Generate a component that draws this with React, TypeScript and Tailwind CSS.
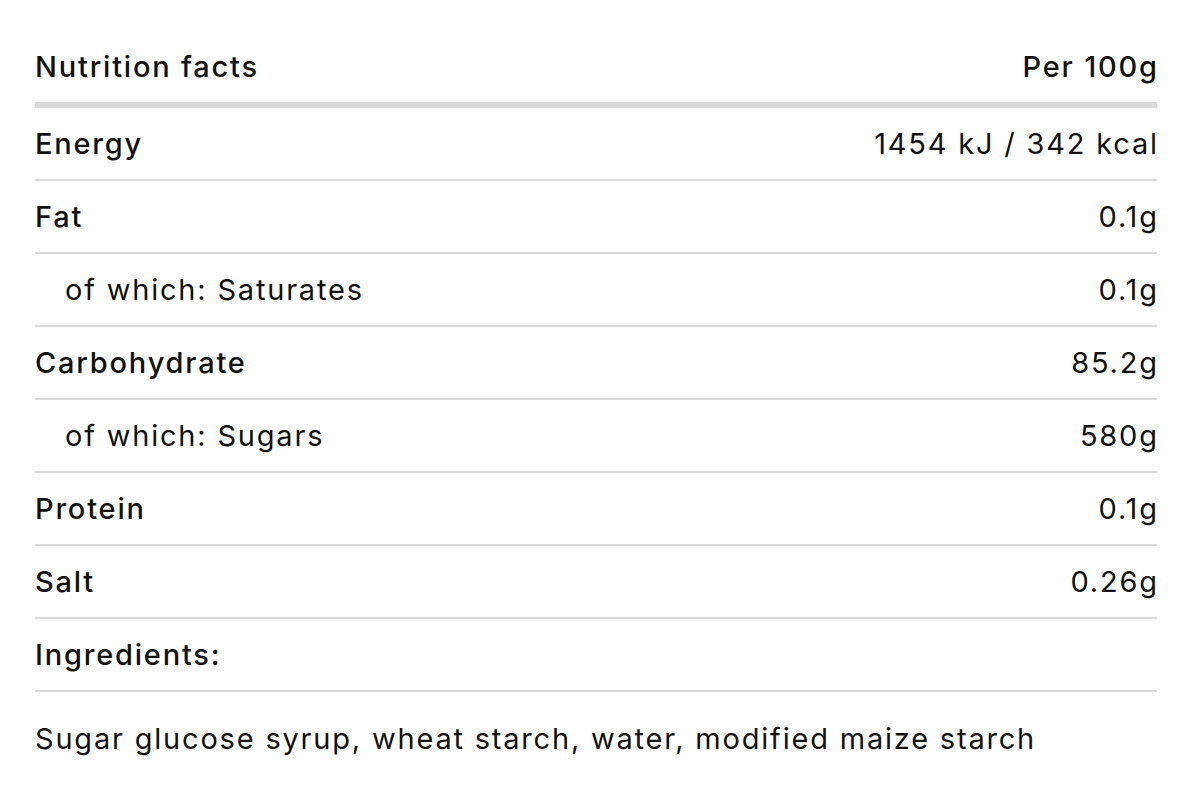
import React from 'react';

type Row = { label: string; value: string; sub?: boolean };

const rows: Row[] = [
  { label: 'Energy', value: '1454 kJ / 342 kcal' },
  { label: 'Fat', value: '0.1g' },
  { label: 'of which: Saturates', value: '0.1g', sub: true },
  { label: 'Carbohydrate', value: '85.2g' },
  { label: 'of which: Sugars', value: '580g', sub: true },
  { label: 'Protein', value: '0.1g' },
  { label: 'Salt', value: '0.26g' },
];

const App: React.FC = () => {
  return (
    <div className="min-h-screen bg-white text-[#111111] font-['Inter',sans-serif] text-[29px] leading-[39px] tracking-[1.8px]">
      <div className="pt-[31px] pl-[35px] pr-[37px]">
        <div className="flex items-center justify-between h-[71px] border-b-[6px] border-[#d9d9d9] box-content font-medium">
          <span>Nutrition facts</span>
          <span className="-mr-[1.8px]">Per 100g</span>
        </div>

        {rows.map((row) => (
          <div
            key={row.label}
            className="flex items-center justify-between h-[71px] border-b-2 border-[#d9d9d9] box-content"
          >
            <span className={row.sub ? 'pl-[30px] font-normal' : 'font-medium'}>{row.label}</span>
            <span className="-mr-[1.8px]">{row.value}</span>
          </div>
        ))}

        <div className="flex items-center h-[71px] border-b-2 border-[#d9d9d9] box-content font-medium">
          <span>Ingredients:</span>
        </div>

        <p className="pt-[27px]">Sugar glucose syrup, wheat starch, water, modified maize starch</p>
      </div>
    </div>
  );
};

export default App;
